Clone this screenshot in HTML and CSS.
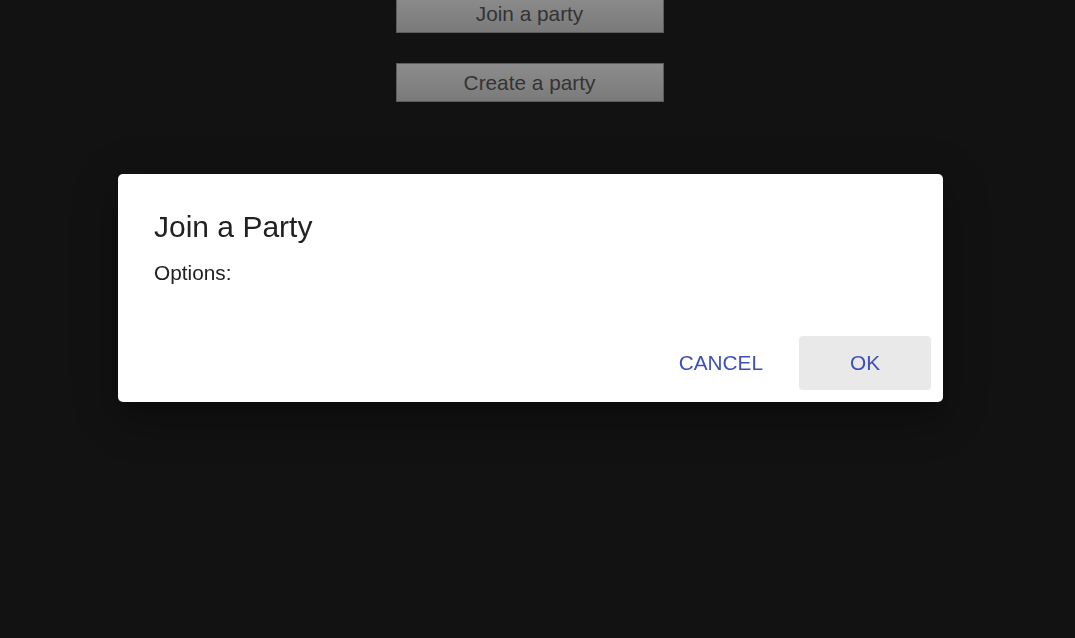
FILE: index.html
```html
<!DOCTYPE html>
<html>
<head>
<meta charset="utf-8">
<link rel="stylesheet" href="styles.css">
</head>
<body>
<main class="menu">
  <button class="menu-btn menu-btn-first">Join a party</button>
  <button class="menu-btn">Create a party</button>
</main>
<div class="overlay">
  <div class="dialog" role="dialog">
    <h2 class="dialog-title">Join a Party</h2>
    <div class="dialog-content">Options:</div>
    <div class="dialog-actions">
      <button class="action action-cancel">Cancel</button>
      <button class="action action-ok">OK</button>
    </div>
  </div>
</div>
</body>
</html>
```
FILE: styles.css
```css
html, body {
  margin: 0;
  padding: 0;
  height: 100%;
  background: #121212;
  font-family: "Liberation Sans", Arial, sans-serif;
  overflow: hidden;
}
.menu {
  width: 1060px;
  display: flex;
  flex-direction: column;
  align-items: center;
  gap: 30px;
  margin-top: -6px;
}
.menu-btn {
  box-sizing: border-box;
  width: 268px;
  height: 39px;
  border: 1px solid #5c5c5c;
  background: linear-gradient(#8c8c8c, #7a7a7a);
  color: #333;
  font-family: "Liberation Sans", Arial, sans-serif;
  font-size: 20.8px;
  padding: 0;
  margin-left: -1px;
}
.overlay {
  position: fixed;
  inset: 0;
  box-sizing: border-box;
  display: flex;
  justify-content: center;
  align-items: flex-start;
  padding: 174px 15px 0 0;
}
.dialog {
  box-sizing: border-box;
  width: 825px;
  height: 228px;
  background: #fff;
  border-radius: 5px;
  box-shadow: 0 11px 15px -7px rgba(0,0,0,0.2), 0 24px 38px 3px rgba(0,0,0,0.14), 0 9px 46px 8px rgba(0,0,0,0.12);
  display: flex;
  flex-direction: column;
  margin-left: 1px;
}
.dialog-title {
  margin: 0;
  padding: 34px 36px 0;
  font-size: 30px;
  font-weight: 400;
  line-height: 38px;
  color: #212121;
}
.dialog-content {
  padding: 14px 36px 0;
  font-size: 20.8px;
  line-height: 26px;
  color: #212121;
  flex: 1;
}
.dialog-actions {
  display: flex;
  justify-content: flex-end;
  align-items: center;
  gap: 22px;
  padding: 0 12px 12px 0;
}
.action {
  box-sizing: border-box;
  height: 54px;
  border: 0;
  border-radius: 4px;
  background: transparent;
  color: #3f51b5;
  font-family: "Liberation Sans", Arial, sans-serif;
  font-size: 20.8px;
  text-transform: uppercase;
  padding: 0 14px;
}
.action-ok {
  min-width: 132px;
  background: #e9e9e9;
}
```
